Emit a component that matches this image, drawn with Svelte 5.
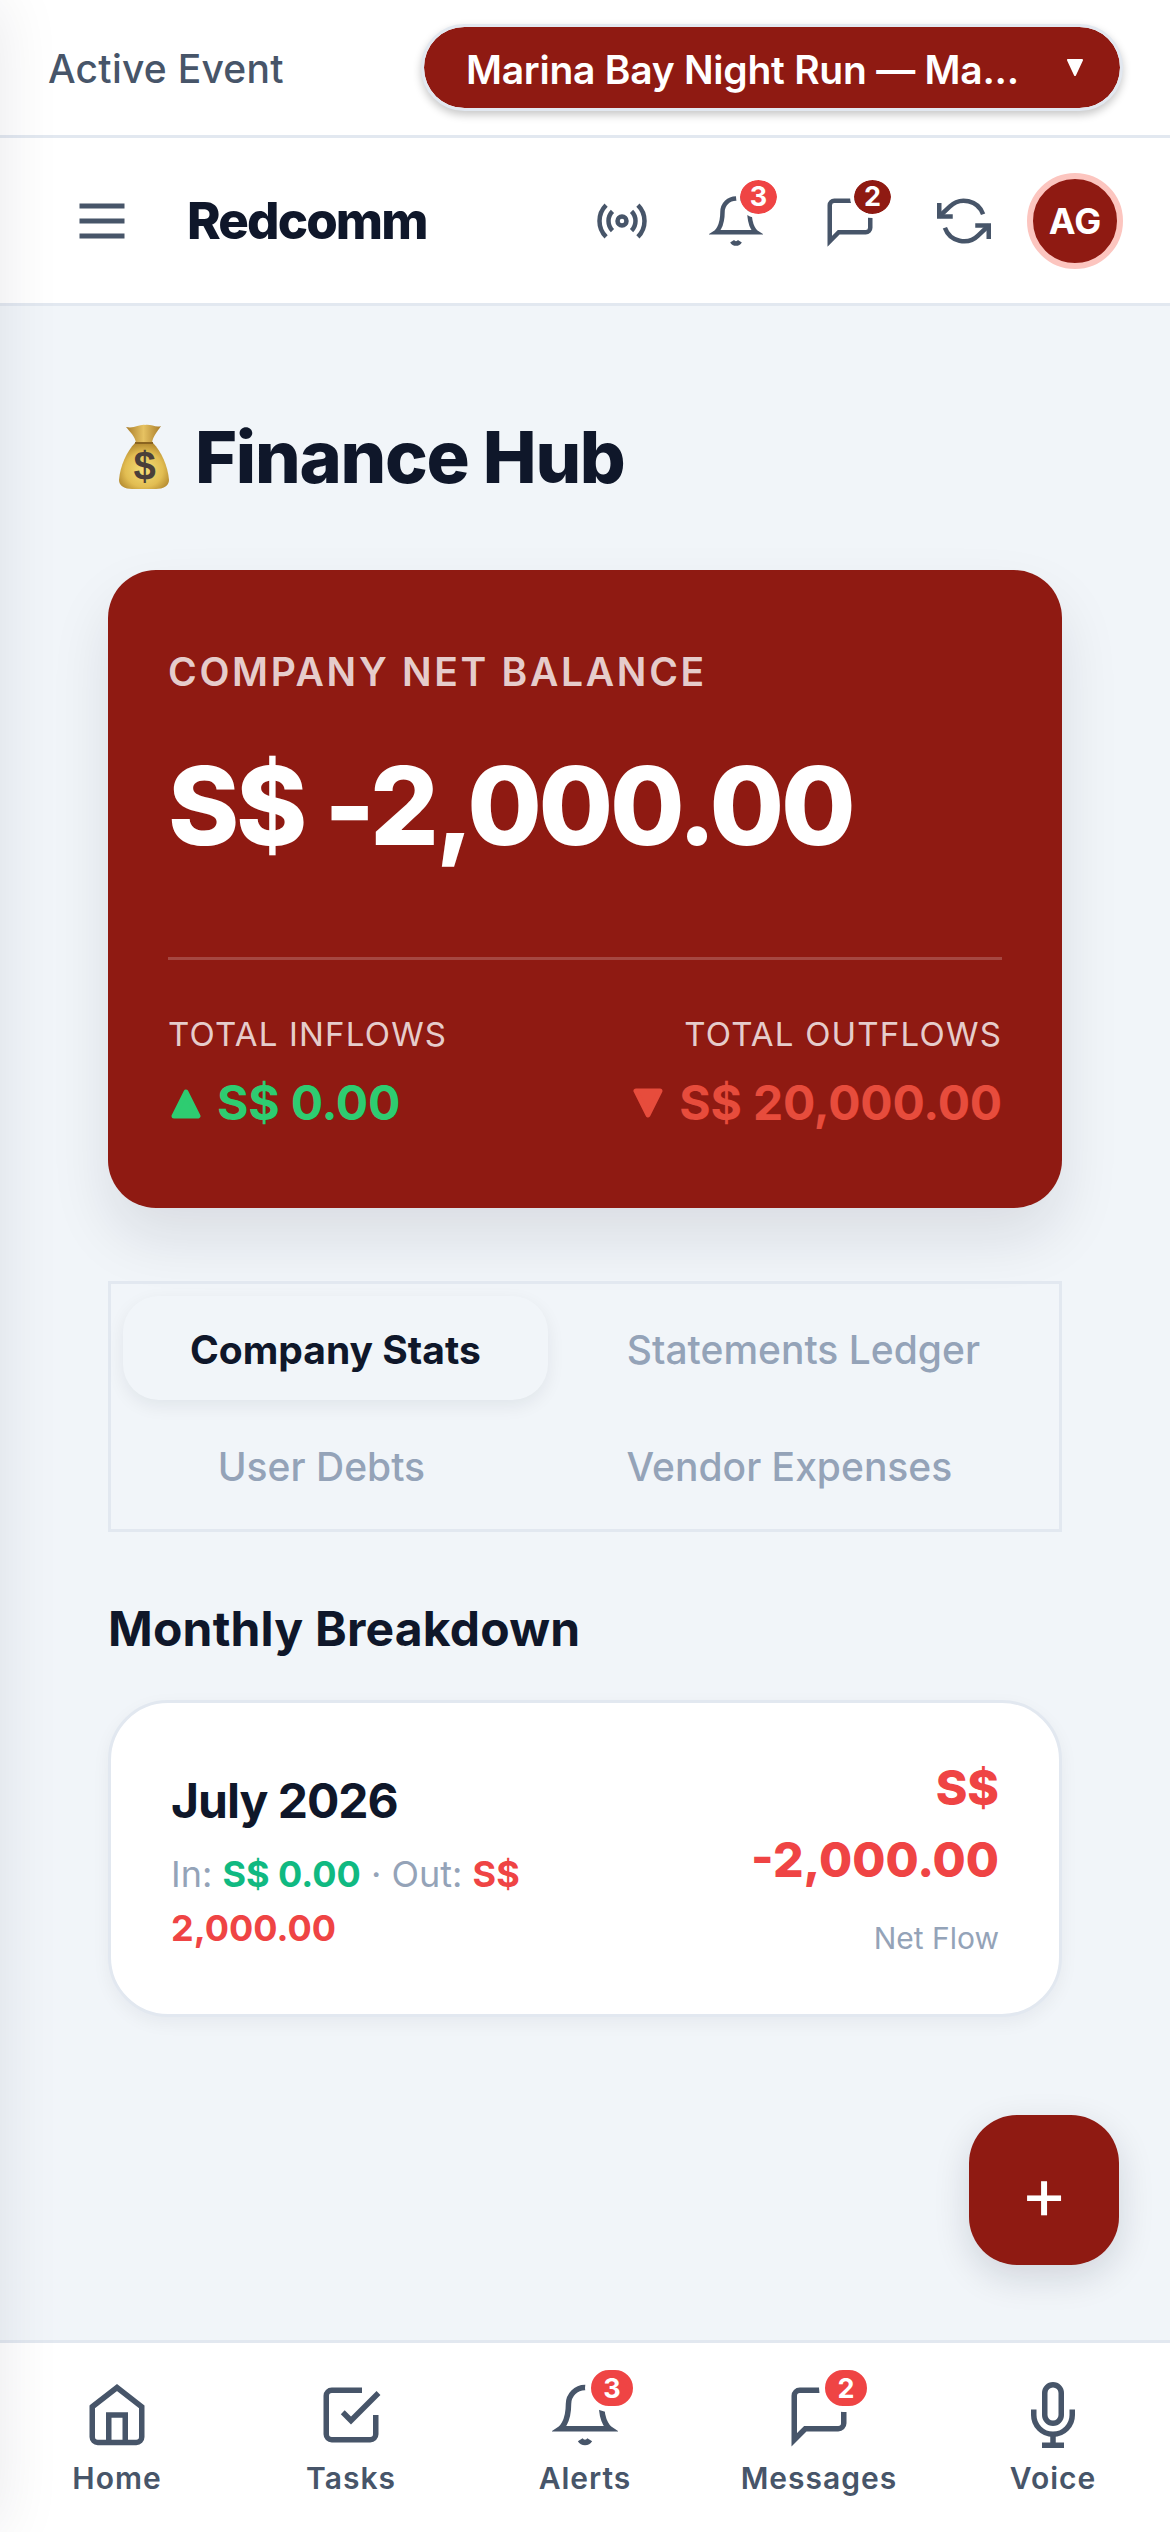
<script>
	const tabs = ['Company Stats', 'Statements Ledger', 'User Debts', 'Vendor Expenses'];
	const navItems = [
		{ label: 'Home', icon: 'home' },
		{ label: 'Tasks', icon: 'tasks' },
		{ label: 'Alerts', icon: 'bell', badge: 3 },
		{ label: 'Messages', icon: 'message', badge: 2 },
		{ label: 'Voice', icon: 'mic' }
	];
</script>

{#snippet icon(name, size)}
	<svg width={size} height={size} viewBox="0 0 24 24" fill="none" stroke="#475569" stroke-width="2">
		{#if name === 'home'}
			<path d="M3 9l9-7 9 7v11a2 2 0 0 1-2 2H5a2 2 0 0 1-2-2z" />
			<polyline points="9 22 9 12 15 12 15 22" />
		{:else if name === 'tasks'}
			<polyline points="9 11 12 14 22 4" />
			<path d="M21 12v7a2 2 0 0 1-2 2H5a2 2 0 0 1-2-2V5a2 2 0 0 1 2-2h11" />
		{:else if name === 'bell'}
			<path d="M18 8A6 6 0 0 0 6 8c0 7-3 9-3 9h18s-3-2-3-9" />
			<path d="M13.73 21a2 2 0 0 1-3.46 0" />
		{:else if name === 'message'}
			<path d="M21 15a2 2 0 0 1-2 2H7l-4 4V5a2 2 0 0 1 2-2h14a2 2 0 0 1 2 2z" />
		{:else if name === 'mic'}
			<path d="M12 1a3 3 0 0 0-3 3v8a3 3 0 0 0 6 0V4a3 3 0 0 0-3-3z" />
			<path d="M19 10v2a7 7 0 0 1-14 0v-2" />
			<line x1="12" y1="19" x2="12" y2="23" />
			<line x1="8" y1="23" x2="16" y2="23" />
		{:else if name === 'radio'}
			<circle cx="12" cy="12" r="2" />
			<path d="M16.24 7.76a6 6 0 0 1 0 8.49m-8.48-.01a6 6 0 0 1 0-8.49m11.31-2.82a10 10 0 0 1 0 14.14m-14.14 0a10 10 0 0 1 0-14.14" />
		{:else if name === 'refresh'}
			<polyline points="1 4 1 10 7 10" />
			<polyline points="23 20 23 14 17 14" />
			<path d="M20.49 9A9 9 0 0 0 5.64 5.64L1 10m22 4l-4.64 4.36A9 9 0 0 1 3.51 15" />
		{:else if name === 'menu'}
			<line x1="3" y1="12" x2="21" y2="12" />
			<line x1="3" y1="6" x2="21" y2="6" />
			<line x1="3" y1="18" x2="21" y2="18" />
		{/if}
	</svg>
{/snippet}

<div class="app">
	<div class="drawer-shadow"></div>

	<div class="event-bar">
		<span class="event-label">Active Event</span>
		<div class="event-select">
			<span class="event-name">Marina Bay Night Run — Ma...</span>
			<svg class="event-caret" width="18" height="19" viewBox="0 0 18 19">
				<polygon points="2,2 16,2 9,17" fill="#fff" stroke="#fff" stroke-width="2" stroke-linejoin="round" />
			</svg>
		</div>
	</div>

	<header class="header">
		<div class="menu-btn">{@render icon('menu', 60)}</div>
		<div class="brand">Redcomm</div>
		<div class="header-actions">
			<div class="head-btn">{@render icon('radio', 54)}</div>
			<div class="head-btn">
				{@render icon('bell', 54)}
				<span class="head-badge">3</span>
			</div>
			<div class="head-btn">
				{@render icon('message', 54)}
				<span class="head-badge dark">2</span>
			</div>
			<div class="head-btn">{@render icon('refresh', 54)}</div>
			<div class="avatar">AG</div>
		</div>
	</header>

	<main class="page">
		<h1 class="title">
			<svg class="bag" width="50" height="66" viewBox="0 0 50 66">
				<defs>
					<radialGradient id="bagFill" cx="50%" cy="58%" r="58%">
						<stop offset="0%" stop-color="#f5df78" />
						<stop offset="65%" stop-color="#e2bd52" />
						<stop offset="100%" stop-color="#b48a30" />
					</radialGradient>
					<linearGradient id="neckFill" x1="0" y1="0" x2="1" y2="0">
						<stop offset="0%" stop-color="#a97c2a" />
						<stop offset="50%" stop-color="#e6c262" />
						<stop offset="100%" stop-color="#a97c2a" />
					</linearGradient>
				</defs>
				<path d="M7 3 C15 5 21 0 26 1 C32 0 37 4 42 2 C38 8 34 12 33 19 L17 19 C16 12 11 8 7 3Z" fill="url(#neckFill)" />
				<path d="M16 19 C8 27 1 42 0 56 C0 62 6 65 13 65 L37 65 C44 65 50 62 50 56 C49 42 42 27 34 19 Z" fill="url(#bagFill)" />
				<path d="M16 19 L34 19" stroke="#8a6420" stroke-width="2" />
				<text x="25" y="56" text-anchor="middle" class="bag-sign">$</text>
			</svg>
			<span>Finance Hub</span>
		</h1>

		<section class="balance">
			<div class="balance-label">COMPANY NET BALANCE</div>
			<div class="balance-value">S$ -2,000.00</div>
			<div class="balance-split">
				<div>
					<div class="split-label">TOTAL INFLOWS</div>
					<div class="split-value up">
						<svg width="30" height="31" viewBox="0 0 30 31">
							<polygon points="15,4 27,28 3,28" fill="currentColor" stroke="currentColor" stroke-width="5" stroke-linejoin="round" />
						</svg>
						<span>S$ 0.00</span>
					</div>
				</div>
				<div class="right">
					<div class="split-label">TOTAL OUTFLOWS</div>
					<div class="split-value down">
						<svg width="30" height="31" viewBox="0 0 30 31">
							<polygon points="3,3 27,3 15,27" fill="currentColor" stroke="currentColor" stroke-width="5" stroke-linejoin="round" />
						</svg>
						<span>S$ 20,000.00</span>
					</div>
				</div>
			</div>
		</section>

		<div class="tabs">
			{#each tabs as tab, i}
				<div class="tab" class:active={i === 0}>{tab}</div>
			{/each}
		</div>

		<h2 class="section-title">Monthly Breakdown</h2>

		<div class="month">
			<div class="month-left">
				<div class="month-name">July 2026</div>
				<div class="month-sub">
					In: <b class="green">S$ 0.00</b> · Out: <b class="red">S$ 2,000.00</b>
				</div>
			</div>
			<div class="month-right">
				<div class="month-net">S$ -2,000.00</div>
				<div class="month-note">Net Flow</div>
			</div>
		</div>
	</main>

	<div class="fab">+</div>

	<nav class="nav">
		{#each navItems as item}
			<div class="nav-item">
				<div class="nav-icon">
					{@render icon(item.icon, 66)}
					{#if item.badge}<span class="nav-badge">{item.badge}</span>{/if}
				</div>
				<span class="nav-label">{item.label}</span>
			</div>
		{/each}
	</nav>
</div>

<style>
	:global(body) {
		margin: 0;
		background: #f1f5f9;
	}

	.app {
		position: relative;
		width: 1170px;
		height: 2532px;
		overflow: hidden;
		display: flex;
		flex-direction: column;
		background: #f1f5f9;
		font-family: Inter, 'Noto Sans', sans-serif;
		color: #0f172a;
	}

	/* shadow of the closed side drawer, it bleeds in from the left edge */
	.drawer-shadow {
		position: absolute;
		top: 0;
		bottom: 0;
		left: -200px;
		width: 200px;
		box-shadow: 0 0 60px rgba(15, 23, 42, 0.09);
		z-index: 5;
	}

	.event-bar {
		display: flex;
		align-items: center;
		justify-content: space-between;
		height: 135px;
		padding: 0 48px;
		background: #fff;
		border-bottom: 3px solid #e2e8f0;
		flex: none;
	}

	.event-label {
		font-size: 39px;
		font-weight: 500;
		letter-spacing: 0.25px;
		color: #475569;
		padding-top: 2px;
	}

	.event-select {
		display: flex;
		align-items: center;
		justify-content: space-between;
		box-sizing: border-box;
		width: 702px;
		height: 87px;
		padding: 0 36px 0 42px;
		border: 3px solid #e2e8f0;
		border-radius: 44px;
		background: #8f1a12;
		background-clip: padding-box;
		box-shadow: 0 4px 8px rgba(0, 0, 0, 0.22);
		color: #fff;
		margin-right: -1px;
	}

	.event-name {
		font-size: 39px;
		font-weight: 600;
		letter-spacing: -0.25px;
		white-space: nowrap;
		padding-top: 3px;
	}

	.header {
		display: flex;
		align-items: center;
		height: 165px;
		padding: 0 47px 0 72px;
		background: #fff;
		border-bottom: 3px solid #e2e8f0;
		flex: none;
	}

	.menu-btn {
		display: flex;
		margin-right: 55px;
	}

	.brand {
		font-size: 51px;
		font-weight: 800;
		letter-spacing: -1.9px;
	}

	.header-actions {
		margin-left: auto;
		display: flex;
		align-items: center;
		gap: 60px;
	}

	.head-btn {
		position: relative;
		display: flex;
	}

	.head-badge {
		position: absolute;
		top: -18px;
		right: -18px;
		box-sizing: border-box;
		width: 45px;
		height: 42px;
		border: 4.5px solid #fff;
		border-radius: 50%;
		background: #ef4444;
		background-clip: padding-box;
		color: #fff;
		font-size: 27px;
		font-weight: 700;
		display: flex;
		align-items: center;
		justify-content: center;
	}

	.head-badge.dark {
		background-color: #8f1a12;
	}

	.avatar {
		box-sizing: border-box;
		width: 96px;
		height: 96px;
		margin-left: -24px;
		border: 6px solid #fcc5bf;
		border-radius: 50%;
		background: #8f1a12;
		color: #fff;
		font-size: 36px;
		font-weight: 700;
		display: flex;
		align-items: center;
		justify-content: center;
	}

	.page {
		flex: 1;
		padding: 112px 108px 0;
	}

	.title {
		display: flex;
		align-items: center;
		gap: 26px;
		margin: 0 0 74px 11px;
		font-size: 72px;
		line-height: 78px;
		font-weight: 800;
		letter-spacing: -1.3px;
	}

	.bag-sign {
		font-family: 'Liberation Sans', sans-serif;
		font-size: 40px;
		fill: #4a3f3a;
	}

	.balance {
		box-sizing: border-box;
		height: 638px;
		padding: 80px 60px 0;
		border-radius: 48px;
		background: #8f1a12;
		box-shadow: 0 30px 60px rgba(15, 23, 42, 0.1);
		color: #fff;
	}

	.balance-label {
		font-size: 39px;
		line-height: 44px;
		font-weight: 600;
		letter-spacing: 2.7px;
		color: rgba(255, 255, 255, 0.8);
	}

	.balance-value {
		margin-top: 47px;
		font-size: 108px;
		line-height: 130px;
		font-weight: 800;
		letter-spacing: -3.3px;
	}

	.balance-split {
		display: flex;
		justify-content: space-between;
		margin-top: 86px;
		padding-top: 54px;
		border-top: 3px solid rgba(255, 255, 255, 0.2);
	}

	.right {
		text-align: right;
	}

	.split-label {
		font-size: 33px;
		line-height: 40px;
		letter-spacing: 1.2px;
		color: rgba(255, 255, 255, 0.8);
	}

	.split-value {
		display: flex;
		align-items: center;
		gap: 16px;
		margin-top: 20px;
		font-size: 48px;
		line-height: 58px;
		font-weight: 700;
		letter-spacing: -0.2px;
	}

	.up svg {
		margin-left: 3px;
	}

	.right .split-value {
		justify-content: flex-end;
	}

	.up {
		color: #2ecc71;
	}

	.down {
		color: #e74c3c;
	}

	.tabs {
		display: flex;
		flex-wrap: wrap;
		gap: 13px 12px;
		margin-top: 73px;
		padding: 12px;
		border: 3px solid #e2e8f0;
	}

	.tab {
		flex: 1 1 auto;
		box-sizing: border-box;
		height: 104px;
		padding: 2px 66px 0;
		border-radius: 36px;
		display: flex;
		align-items: center;
		justify-content: center;
		font-size: 39px;
		font-weight: 500;
		color: #94a3b8;
	}

	.tab.active {
		font-weight: 700;
		color: #0f172a;
		box-shadow: 0 6px 18px rgba(15, 23, 42, 0.07);
	}

	.section-title {
		margin: 68px 0 42px;
		font-size: 48px;
		line-height: 58px;
		font-weight: 700;
		letter-spacing: 0.2px;
	}

	.month {
		display: flex;
		justify-content: space-between;
		align-items: center;
		gap: 24px;
		box-sizing: border-box;
		height: 317px;
		padding: 0 60px;
		border: 3px solid #e2e8f0;
		border-radius: 60px;
		background: #fff;
		box-shadow: 0 6px 18px rgba(15, 23, 42, 0.05);
	}

	.month-left {
		padding-top: 10px;
	}

	.month-name {
		font-size: 48px;
		line-height: 58px;
		font-weight: 700;
		letter-spacing: -1px;
		margin-bottom: 17px;
	}

	.month-sub {
		font-size: 36px;
		line-height: 54px;
		color: #94a3b8;
	}

	.month-sub b {
		font-weight: 700;
	}

	.green {
		color: #10b981;
	}

	.red {
		color: #ef4444;
	}

	.month-right {
		text-align: right;
	}

	.month-net {
		font-size: 48px;
		line-height: 72px;
		font-weight: 800;
		color: #ef4444;
	}

	.month-note {
		margin: 24px 0 10px;
		font-size: 30px;
		line-height: 36px;
		color: #94a3b8;
	}

	.fab {
		position: absolute;
		left: 969px;
		top: 2115px;
		width: 150px;
		height: 150px;
		border-radius: 48px;
		background: #8f1a12;
		box-shadow: 0 12px 36px rgba(15, 23, 42, 0.14);
		color: #fff;
		font-size: 72px;
		font-weight: 400;
		line-height: 1;
		padding-top: 6px;
		box-sizing: border-box;
		display: flex;
		align-items: center;
		justify-content: center;
		z-index: 3;
	}

	.nav {
		display: flex;
		box-sizing: border-box;
		height: 192px;
		padding-top: 39px;
		background: #fff;
		border-top: 3px solid #e2e8f0;
		flex: none;
	}

	.nav-item {
		flex: 1;
		display: flex;
		flex-direction: column;
		align-items: center;
	}

	.nav-icon {
		position: relative;
		display: flex;
		height: 66px;
	}

	.nav-badge {
		position: absolute;
		top: -18px;
		left: 33px;
		box-sizing: content-box;
		min-width: 42px;
		height: 36px;
		border: 6px solid #fff;
		border-radius: 24px;
		background: #ef4444;
		color: #fff;
		font-size: 27px;
		font-weight: 700;
		display: flex;
		align-items: center;
		justify-content: center;
	}

	.nav-label {
		margin-top: 12px;
		font-size: 30px;
		line-height: 36px;
		font-weight: 600;
		letter-spacing: 1px;
		color: #475569;
	}
</style>
